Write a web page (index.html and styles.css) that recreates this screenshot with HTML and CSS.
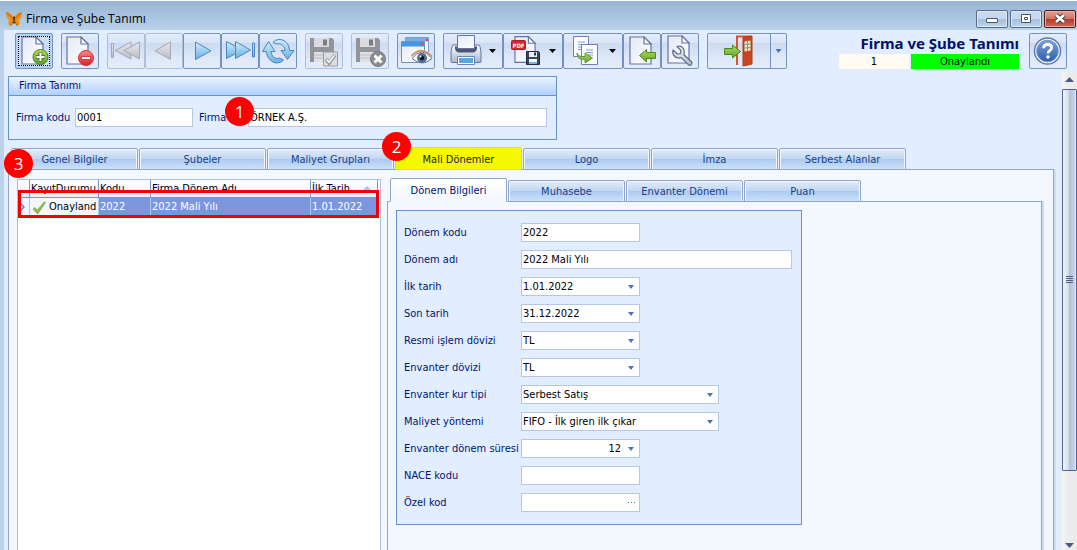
FILE: index.html
```html
<!DOCTYPE html>
<html lang="tr">
<head>
<meta charset="utf-8">
<title>Firma ve Şube Tanımı</title>
<link rel="stylesheet" href="styles.css">
</head>
<body>
<svg class="defs" aria-hidden="true">
  <defs>
    <linearGradient id="paper" x1="0" y1="0" x2="1" y2="1"><stop offset="0" stop-color="#e4e9f3"/><stop offset="1" stop-color="#ffffff"/></linearGradient>
    <linearGradient id="green" x1="0" y1="0" x2="0" y2="1"><stop offset="0" stop-color="#b6dc5c"/><stop offset="1" stop-color="#5da02c"/></linearGradient>
    <linearGradient id="red" x1="0" y1="0" x2="0" y2="1"><stop offset="0" stop-color="#f58a8a"/><stop offset="1" stop-color="#dc1f2b"/></linearGradient>
    <linearGradient id="blue" x1="0" y1="0" x2="0" y2="1"><stop offset="0" stop-color="#d3ecfb"/><stop offset="1" stop-color="#67b0e2"/></linearGradient>
    <linearGradient id="gray" x1="0" y1="0" x2="0" y2="1"><stop offset="0" stop-color="#e6e8ec"/><stop offset="1" stop-color="#b9bdc4"/></linearGradient>
    <linearGradient id="steel" x1="0" y1="0" x2="0" y2="1"><stop offset="0" stop-color="#fafbfe"/><stop offset="1" stop-color="#a9b6cf"/></linearGradient>
    <linearGradient id="ball" x1="0" y1="0" x2="0" y2="1"><stop offset="0" stop-color="#7ba4dc"/><stop offset="1" stop-color="#2c5cac"/></linearGradient>
    <symbol id="page" viewBox="0 0 24 29"><path d="M1 1h14l7 7v20H1z" fill="url(#paper)" stroke="#6472a4" stroke-width="1.2"/><path d="M15 1v7h7z" fill="#fff" stroke="#6472a4" stroke-width="1.2"/></symbol>
    <symbol id="floppy" viewBox="0 0 26 26"><path d="M1 1h22l2 2v22H1z" fill="#92949a"/><path d="M5 1h15v9H5z" fill="#d9dbe0"/><path d="M14 2.500h4v6h-4z" fill="#7b7d83"/><path d="M5 15h16v10H5z" fill="#dfe0e3"/><path d="M5 18h16M5 21h16" stroke="#b9bbc0"/></symbol>
  </defs>
</svg>
<div class="window">
  <header class="titlebar">
    <svg class="logo" width="16" height="16" viewBox="0 0 16 16" aria-hidden="true"><path d="M7.500 7C6 2.500 2.500.5.300 1.300 0 4 .8 8.500 3.500 9 1.500 10.500 2.500 14 4.500 15.300 6.500 14 7.500 11 7.700 9z" fill="#f08c12"/><path d="M8.500 7C10 2.500 13.500.5 15.700 1.300 16 4 15.200 8.500 12.500 9c2 1.500 1 5-1 6.300C9.500 14 8.500 11 8.300 9z" fill="#f08c12"/><path d="M8 5.500v7" stroke="#3c200a" stroke-width="1.600"/><path d="M.5 1.500l6.500 6M15.500 1.500L9 7.500M5 14.500l2.500-5M11 14.500L8.500 9.500" stroke="#a85a0c" stroke-width=".8"/></svg>
    <span class="caption">Firma ve Şube Tanımı</span>
    <div class="controls">
      <button class="ctl" aria-label="Küçült"><svg width="30" height="16" viewBox="0 0 30 16"><rect x="9.500" y="7.500" width="11" height="4" rx=".5" fill="#fff" stroke="#4a5566"/></svg></button>
      <button class="ctl" aria-label="Büyüt"><svg width="30" height="16" viewBox="0 0 30 16"><path d="M10.500 3.500h9v8h-9z" fill="#fff" stroke="#4a5566"/><path d="M13.500 6.500h3v2h-3z" stroke="#4a5566" fill="#fff"/></svg></button>
      <button class="ctl ctl-close" aria-label="Kapat"><svg width="30" height="16" viewBox="0 0 30 16"><path d="M11 4l8 7M19 4l-8 7" stroke="#4b3038" stroke-width="4.400"/><path d="M11 4l8 7M19 4l-8 7" stroke="#fff" stroke-width="2.600"/></svg></button>
    </div>
  </header>

  <div class="toolbar">
    <div class="tools">
      <div class="group"><button class="tool tool-focus" aria-label="Yeni"><svg width="36" height="34" viewBox="0 0 36 34"><use href="#page" x="5" y="2" width="24" height="29"/><circle cx="24.500" cy="23" r="7.500" fill="url(#green)" stroke="#4a8420"/><path d="M24.500 18.500v9M20 23h9" stroke="#4a7d22" stroke-width="4"/><path d="M24.500 19v8M20.500 23h8" stroke="#fff" stroke-width="2"/></svg></button></div>
      <div class="group"><button class="tool" aria-label="Sil"><svg width="36" height="34" viewBox="0 0 36 34"><use href="#page" x="4" y="2" width="24" height="29"/><circle cx="24" cy="24" r="7.500" fill="url(#red)" stroke="#d33"/><path d="M19.500 22.500h9v3h-9z" fill="#fff" stroke="#c22" stroke-width=".8"/></svg></button></div>
      <div class="group">
        <button class="tool" disabled aria-label="İlk"><svg width="36" height="34" viewBox="0 0 36 34"><g fill="url(#gray)" stroke="#a3a8b2"><path d="M3.500 9.500h2v14h-2z"/><path d="M23 8v17L7 16.500z"/><path d="M31.500 8v17L16 16.500z"/></g></svg></button>
        <button class="tool" disabled aria-label="Önceki"><svg width="36" height="34" viewBox="0 0 36 34"><path d="M24.500 8v17.500L9 16.800z" fill="url(#gray)" stroke="#a3a8b2"/></svg></button>
        <button class="tool" aria-label="Sonraki"><svg width="36" height="34" viewBox="0 0 36 34"><path d="M11.500 8v17.500L27 16.800z" fill="url(#blue)" stroke="#4a86c4"/></svg></button>
        <button class="tool" aria-label="Son"><svg width="36" height="34" viewBox="0 0 36 34"><g fill="url(#blue)" stroke="#4a86c4"><path d="M4.500 7.500v17l16-8.500z"/><path d="M13.500 7.500v17l15-8.500z"/><path d="M30.500 9h2v14h-2z"/></g></svg></button>
        <button class="tool" aria-label="Yenile"><svg width="36" height="34" viewBox="0 0 36 34"><g fill="url(#blue)" stroke="#4788b8" stroke-linejoin="round"><path d="M13 8.500Q15 5.500 19 5.500c6 0 10 4 10.500 11H34l-6.500 9-6.500-9h4c-.5-5-4-7.500-8-6.500z"/><path d="M23.500 26Q21 29 17 29C11 28.500 7 24 6.500 17.500H2.500l6-10 6.500 10h-4c.5 5 4 8 8.500 6.500z"/></g></svg></button>
      </div>
      <div class="group"><button class="tool" disabled aria-label="Kaydet"><svg width="36" height="34" viewBox="0 0 36 34"><use href="#floppy" x="3" y="3" width="26" height="26"/><path d="M17.500 18h14v14h-14z" fill="#dcdde0" stroke="#9a9ca1"/><path d="M20 25l3 4 6-8" fill="none" stroke="#8d8f94" stroke-width="3.400"/><path d="M20.500 25.500l2.500 2.800 5.500-7" fill="none" stroke="#fff" stroke-width="1.500"/></svg></button></div>
      <div class="group"><button class="tool" disabled aria-label="Vazgeç"><svg width="36" height="34" viewBox="0 0 36 34"><use href="#floppy" x="3" y="3" width="26" height="26"/><circle cx="26" cy="25" r="7.500" fill="#8a8c91" stroke="#77797e"/><path d="M22.500 21.500l7 7M29.500 21.500l-7 7" stroke="#fff" stroke-width="3"/></svg></button></div>
      <div class="group"><button class="tool" aria-label="İzle"><svg width="36" height="34" viewBox="0 0 36 34"><path d="M7.500 3.500h23v15h-23z" fill="#fff" stroke="#7a9cc8"/><path d="M8 4h22v3.500H8z" fill="#6db1e6"/><path d="M3.500 7.500h23v21h-23z" fill="url(#paper)" stroke="#6e8fc0"/><path d="M4 8h22v4.500H4z" fill="#4797dc"/><path d="M28 5h2v2h-2zM23 9h2v2h-2z" fill="#e34a34"/><path d="M14 24.500q10-13 20 0-10 9-20 0z" fill="#fff" stroke="#6b6f86"/><path d="M13.500 22q10-11 20.500 1" fill="none" stroke="#c99a72" stroke-width="2"/><circle cx="24" cy="24" r="5" fill="#4f6c94"/><circle cx="24" cy="24" r="2.200" fill="#0c1420"/><circle cx="22.500" cy="22.500" r="1" fill="#fff"/></svg></button></div>
      <div class="group">
        <button class="tool tool-wide" aria-label="Yazdır"><svg width="58" height="34" viewBox="0 0 58 34"><path d="M8 12.500q0-1.500 2-1.500h24q2 0 2 1.500l1 5.500v9.500q0 1-1 1H8q-1 0-1-1V18z" fill="url(#steel)" stroke="#66759c"/><path d="M11 12.500h22V15q-1.500 3.500-4 3.500H15q-2.500 0-4-3.500z" fill="#4b5572"/><path d="M13.500 1.500h17v13h-17z" fill="url(#paper)" stroke="#66759c"/><path d="M13.500 22.500h17v8h-17z" fill="#fff" stroke="#6c86b0"/><path d="M15 24h14v5H15z" fill="#57a7e2"/><path d="M45 15h7l-3.500 4z" fill="#000"/></svg></button>
        <button class="tool tool-wide" aria-label="PDF olarak kaydet"><svg width="58" height="34" viewBox="0 0 58 34"><use href="#page" x="10" y="1" width="23" height="29"/><rect x="7.500" y="6.500" width="14" height="9" rx="1" fill="#d3292f" stroke="#a81d24"/><text class="pdf" x="14.500" y="13.500" text-anchor="middle">PDF</text><path d="M22.500 17.500h12l1 1v12h-13z" fill="#39445f" stroke="#1f2a44"/><path d="M25 18h8v5h-8z" fill="#e8edf5"/><path d="M30 18.500h2v3h-2z" fill="#2b3550"/><path d="M25 25h8v5h-8z" fill="#fff"/><path d="M25 28h8v2h-8z" fill="#6cb6e6"/><path d="M45 15h7l-3.500 4z" fill="#000"/></svg></button>
        <button class="tool tool-wide" aria-label="Kopyala"><svg width="58" height="34" viewBox="0 0 58 34"><path d="M9.500 2.500h15v20h-15z" fill="#fbfcff" stroke="#6f7fb4"/><path d="M14 8h7M14 10.500h7M14 13h7M14 15.500h4" stroke="#8498cc"/><path d="M17.500 10.500h16v20h-16z" fill="#fbfcff" stroke="#6f7fb4"/><path d="M22 16h7M22 18.500h7M23 21h6" stroke="#8498cc"/><path d="M13 19q1 4 8 3.500v-3.500l7.500 5-7.500 5v-3.500Q13 26 13 19z" fill="url(#green)" stroke="#4c8a1e" stroke-width=".8"/><path d="M45 15h7l-3.500 4z" fill="#000"/></svg></button>
        <button class="tool" aria-label="İçe aktar"><svg width="36" height="34" viewBox="0 0 36 34"><use href="#page" x="5" y="2" width="24" height="29"/><path d="M15.500 21.500l7-6v3h9v6h-9v3.500z" fill="url(#green)" stroke="#4c8a1e"/></svg></button>
        <button class="tool" aria-label="Ayarlar"><svg width="36" height="34" viewBox="0 0 36 34"><use href="#page" x="5" y="1" width="24" height="29"/><path d="M15 12.500l4 4-.5 3-3 .5-4.500-4c-1 3.500 1 7.500 5 8 1.500.2 2.500-.2 3.500-.2l7 7c2 1.500 4.500-1 3-3l-7.500-7c.5-1.500.6-3-.2-5-1.100-2.800-4-4-6.800-3.300z" fill="url(#steel)" stroke="#5b6a86" stroke-width="1.200" stroke-linejoin="round"/></svg></button>
      </div>
      <div class="group">
        <button class="tool tool-exit" aria-label="Çıkış"><svg width="61" height="34" viewBox="0 0 61 34"><path d="M29 31V2.500h14" fill="none" stroke="#e0522c" stroke-width="2"/><path d="M35 3.500l9-1.500v28l-9 2z" fill="#c9441f" stroke="#b23a18"/><path d="M36.500 7.500l6-1v10l-6 1z" fill="#f3e6c4"/><path d="M39.500 6.500v11M36 10.500l7-.5M36 14l7-.5" stroke="#7f9a72"/><path d="M16.500 14.500h8v-3.500l8 6.500-8 6.500v-3.500h-8z" fill="url(#green)" stroke="#4c8a1e"/></svg></button>
        <button class="tool tool-drop" aria-label="Çıkış seçenekleri"><i class="arrow"></i></button>
      </div>
    </div>
    <div class="summary">
      <h1 class="heading">Firma ve Şube Tanımı</h1>
      <div class="states"><span class="state-no">1</span><span class="state-ok">Onaylandı</span></div>
    </div>
    <button class="tool" aria-label="Yardım"><svg width="36" height="34" viewBox="0 0 36 34"><circle cx="17.500" cy="17" r="13" fill="#f5f8fd" stroke="#5b78ac" stroke-width="1.400"/><circle cx="17.500" cy="17" r="10.800" fill="url(#ball)" stroke="#6e92cc"/><path d="M13.700 14.200q0-3.700 4-3.700 3.900 0 3.900 3.200 0 1.800-2 3-1.500 1-1.500 2.800" fill="none" stroke="#fff" stroke-width="2.800"/><circle cx="18" cy="23" r="1.800" fill="#fff"/></svg></button>
  </div>

  <div class="body">
    <main class="content">
      <section class="company">
        <h2 class="company-title">Firma Tanımı</h2>
        <div class="company-fields">
          <label for="code">Firma kodu</label>
          <input class="box code" id="code" value="0001">
          <div class="name-label"><label for="name">Firma</label><span class="badge badge-1">1</span></div>
          <input class="box name" id="name" value="ÖRNEK A.Ş.">
        </div>
      </section>

      <nav class="tabs main-tabs">
        <button class="tab">Genel Bilgiler</button>
        <button class="tab">Şubeler</button>
        <button class="tab">Maliyet Grupları</button>
        <button class="tab tab-marked">Mali Dönemler<span class="badge badge-2">2</span></button>
        <button class="tab">Logo</button>
        <button class="tab">İmza</button>
        <button class="tab">Serbest Alanlar</button>
      </nav>

      <div class="sheet">
        <section class="list">
          <table class="grid">
            <colgroup><col class="c-mark"><col class="c-state"><col class="c-code"><col class="c-name"><col class="c-date"></colgroup>
            <thead><tr><th></th><th>KayıtDurumu</th><th>Kodu</th><th>Firma Dönem Adı</th><th><span class="sorted">İlk Tarih<i class="sort"></i></span></th></tr></thead>
            <tbody><tr>
              <td class="plain"><svg class="mark" width="6" height="8" viewBox="0 0 6 8"><path d="M1 0l4 4-4 4" fill="none" stroke="#3d86d8" stroke-width="1.500"/></svg></td>
              <td class="plain"><span class="status"><svg width="13" height="13" viewBox="0 0 13 13"><path d="M0 8l2-1.500L4.500 9 11 1l1.500.5L5 12.500H4z" fill="#8fc14c" stroke="#6a9c34" stroke-width=".6"/></svg>Onayland</span></td>
              <td>2022</td><td>2022 Mali Yılı</td><td>1.01.2022</td>
            </tr></tbody>
          </table>
          <div class="frame"></div>
          <span class="badge badge-3">3</span>
        </section>

        <section class="detail">
          <nav class="tabs sub-tabs">
            <button class="tab tab-open">Dönem Bilgileri</button>
            <button class="tab">Muhasebe</button>
            <button class="tab">Envanter Dönemi</button>
            <button class="tab">Puan</button>
          </nav>
          <div class="pane">
            <form class="form">
              <label for="f1">Dönem kodu</label><input class="box short" id="f1" value="2022">
              <label for="f2">Dönem adı</label><input class="box" id="f2" value="2022 Mali Yılı">
              <label for="f3">İlk tarih</label><div class="combo short"><input class="box" id="f3" value="1.01.2022"><i class="arrow"></i></div>
              <label for="f4">Son tarih</label><div class="combo short"><input class="box" id="f4" value="31.12.2022"><i class="arrow"></i></div>
              <label for="f5">Resmi işlem dövizi</label><div class="combo short"><select class="box" id="f5"><option>TL</option></select><i class="arrow"></i></div>
              <label for="f6">Envanter dövizi</label><div class="combo short"><select class="box" id="f6"><option>TL</option></select><i class="arrow"></i></div>
              <label for="f7">Envanter kur tipi</label><div class="combo medium"><select class="box" id="f7"><option>Serbest Satış</option></select><i class="arrow"></i></div>
              <label for="f8">Maliyet yöntemi</label><div class="combo medium"><select class="box" id="f8"><option>FIFO - İlk giren ilk çıkar</option></select><i class="arrow"></i></div>
              <label for="f9">Envanter dönem süresi</label><div class="combo short"><input class="box number" id="f9" value="12"><i class="arrow"></i></div>
              <label for="f10">NACE kodu</label><input class="box short" id="f10">
              <label for="f11">Özel kod</label><div class="combo short"><input class="box" id="f11"><button type="button" class="more" aria-label="Seç"><svg width="9" height="3" viewBox="0 0 9 3"><path d="M1 1h1v1H1zM4 1h1v1H4zM7 1h1v1H7z" fill="#4a76b4"/></svg></button></div>
            </form>
          </div>
        </section>
      </div>
    </main>
    <div class="scroll">
      <svg class="scroll-arrow" width="9" height="5" viewBox="0 0 9 5"><path d="M0 5h9L4.500 0z" fill="#4a5a86"/></svg>
      <div class="thumb"><i class="grip"></i></div>
      <svg class="scroll-arrow" width="9" height="5" viewBox="0 0 9 5"><path d="M0 0h9L4.500 5z" fill="#4a5a86"/></svg>
    </div>
  </div>
</div>
</body>
</html>
```

FILE: styles.css
```css
* { box-sizing: border-box; }

body {
  margin: 0;
  color: #000;
  font: 11px/14px "DejaVu Sans Condensed", "DejaVu Sans", sans-serif;
}

button, input, select { margin: 0; padding: 0; color: inherit; font: inherit; }
.defs { position: absolute; width: 0; height: 0; }

.window {
  display: flex;
  flex-direction: column;
  min-height: 100vh;
  background: #e2eeff;
  border-left: 4px solid #b9d1ea;
}

/* title bar */
.titlebar {
  display: flex;
  align-items: center;
  height: 30px;
  margin-left: -4px;
  padding: 6px 1px 0 6px;
  gap: 4px;
  border-top: 1px solid #fff;
  background: linear-gradient(#98b4d2, #b9d1ea);
}
.caption { flex: 1; font: 12px/16px "Open Sans", sans-serif; }
.controls { display: flex; gap: 2px; }
.ctl {
  width: 32px;
  height: 18px;
  border: 1px solid #566b85;
  border-radius: 2px;
  background: linear-gradient(#c6d9ee 50%, #a3bedb 50%, #bdd4ec);
  box-shadow: inset 0 0 0 1px #dce9f6;
}
.ctl svg { display: block; }
.ctl-close {
  border-color: #4a1a20;
  background: linear-gradient(#e2a196, #d0735f 50%, #b5382a 50%, #cc6a52);
  box-shadow: inset 0 0 0 1px #e8b0a4;
}

/* toolbar */
.toolbar { display: flex; align-items: flex-start; padding: 3px 10px 3px 11px; gap: 10px; }
.tools { display: flex; flex: 1; gap: 8px; }
.group { display: flex; }
.tool {
  flex: none;
  width: 38px;
  height: 36px;
  border: 1px solid #7391c3;
  border-radius: 2px;
  background: linear-gradient(#e4edfa, #d8e4f5 26%, #ccdaf0 27%, #dfe9f9 75%, #e2edfc);
}
.tool svg { display: block; }
.tool:disabled { border-color: #aebfd9; }
.tool-focus {
  background: linear-gradient(#d4e4f8, #c6daf4 50%, #d6e6fa);
  box-shadow: inset 0 0 0 2px #b4d0f2;
  outline: 1px dotted #000;
  outline-offset: -4px;
}
.tool-wide { width: 60px; }
.tool-exit { width: 64px; border-radius: 2px 0 0 2px; }
.tool-drop { display: flex; align-items: center; justify-content: center; width: 16px; border-left: 0; border-radius: 0 2px 2px 0; }
.pdf { fill: #fff; font: bold 6px "DejaVu Sans Condensed", sans-serif; }
.summary { width: 180px; }
.heading { margin: 0; color: #00126e; font: bold 15px/21px "Noto Sans", sans-serif; text-align: right; white-space: nowrap; }
.states { display: flex; gap: 2px; line-height: 15px; text-align: center; }
.state-no { width: 70px; background: #fffbf0; }
.state-ok { flex: 1; background: #00ff00; }

.arrow { display: block; flex: none; width: 6px; height: 4px; background: #4a76b4; clip-path: polygon(0 0, 100% 0, 50% 100%); }

/* body and scroll bar */
.body { display: flex; flex: 1; }
.content { display: flex; flex: 1; flex-direction: column; min-width: 0; padding: 4px 8px 0 4px; }
.scroll {
  display: flex;
  flex: none;
  flex-direction: column;
  align-items: center;
  width: 15px;
  padding: 5px 0 2px;
  background: linear-gradient(90deg, #f6f6f6, #ececec 40%);
}
.scroll-arrow { flex: none; }
.thumb {
  display: flex;
  flex: 0 0 81%;
  align-items: center;
  justify-content: center;
  width: 15px;
  margin: 7px 0 auto;
  border: 1px solid #4f6296;
  border-radius: 1px;
  background: linear-gradient(90deg, #f2f4f8, #d3dbe7 45%, #b3c1d6 50%, #c8d4e6 90%, #f0f4fa);
}
.grip { width: 7px; height: 7px; background: repeating-linear-gradient(#4f5f88 0 1px, transparent 1px 2px); }

/* fields */
label { color: #00156e; white-space: nowrap; }
.box {
  display: block;
  width: 100%;
  min-width: 0;
  height: 19px;
  padding: 0 1px;
  border: 1px solid #b4c7e3;
  border-radius: 0;
  background: #fff;
  appearance: none;
}
.number { padding-right: 18px; text-align: right; }
.combo { position: relative; }
.combo .arrow { position: absolute; top: 8px; right: 6px; pointer-events: none; }
.more { position: absolute; top: 1px; right: 1px; display: flex; align-items: center; justify-content: center; width: 16px; height: 17px; border: 0; background: none; }

.company { width: 549px; border: 1px solid #6593cf; }
.company-title {
  margin: 0;
  padding: 2px 10px;
  border-bottom: 1px solid #6593cf;
  color: #00156e;
  background: linear-gradient(#eaf3ff, #cfe2ff 50%, #b0d1ff);
  font: inherit;
}
.company-fields { display: flex; align-items: center; padding: 12px 9px 12px 7px; }
.code { flex: none; width: 118px; margin: 0 6px 0 auto; }
.name-label { position: relative; width: 49px; }
.name { flex: none; width: 299px; }

/* tabs */
.tabs { position: relative; z-index: 1; display: flex; align-items: flex-end; }
.main-tabs { margin-top: 7px; padding-left: 3px; }
.sub-tabs { padding-left: 3px; }
.tab {
  position: relative;
  width: 127px;
  height: 22px;
  margin-right: 1px;
  padding-top: 2px;
  border: 1px solid #8fa5cb;
  border-radius: 2px 2px 0 0;
  color: #15428b;
  background: linear-gradient(#e2ecf9, #c2d7f1 48%, #abc9ef 50%, #cde0f8);
  box-shadow: inset 1px 1px #f2f7fe, inset -1px 0 #f2f7fe;
}
.tab-marked { height: 23px; border-color: #d8dc50; color: #222; background: #f4f800; box-shadow: none; }
.sub-tabs .tab { width: 117px; }
.sub-tabs .tab-open { height: 24px; border-bottom-color: #f3f8ff; color: #00156e; background: linear-gradient(#fff, #f3f8ff); box-shadow: none; }

.sheet {
  display: flex;
  flex: 1;
  margin-top: -1px;
  padding: 8px 11px 0 8px;
  gap: 6px;
  border: 1px solid #8fa5cb;
  border-bottom: 0;
  background: #f3f8ff;
  box-shadow: 2px 0 #cadef5;
}

/* period list */
.list { position: relative; flex: none; width: 364px; margin-top: 1px; border: 1px solid #a9bedc; border-bottom: 0; background: #fff; }
.grid { width: 360px; border-collapse: separate; border-spacing: 0; table-layout: fixed; }
.grid th, .grid td { height: 18px; padding: 0 1px; font-weight: normal; text-align: left; white-space: nowrap; }
.grid th { overflow: hidden; border-right: 1px solid #6f9ad2; border-bottom: 1px solid #6f9ad2; background: linear-gradient(#fff, #e6effb); }
.grid td { border-right: 1px solid #b4c7ea; color: #fff; background: #7b96df; }
.grid .plain { color: #000; background: #f3f8ff; }
.c-mark { width: 12px; }
.c-state { width: 69px; }
.c-code { width: 52px; }
.c-name { width: 160px; }
.sorted { display: flex; align-items: center; justify-content: space-between; }
.sort { width: 10px; height: 5px; margin-right: 4px; background: #a4c8f0; clip-path: polygon(50% 0, 100% 100%, 0 100%); }
.mark { display: block; }
.status { display: flex; align-items: center; gap: 3px; padding-left: 2px; }
.frame { position: absolute; top: 10px; left: 0; width: 361px; height: 28px; border: 3px solid #f00000; }

/* period form */
.detail { display: flex; flex: 1; flex-direction: column; min-width: 0; }
.pane { flex: 1; margin-top: -1px; padding: 8px 8px 24px; border: 1px solid #8fa5cb; border-bottom: 0; box-shadow: 2px 0 #cadef5; }
.form {
  display: grid;
  grid-template-columns: 117px 1fr;
  grid-auto-rows: 19px;
  align-items: center;
  row-gap: 8px;
  width: 406px;
  padding: 12px 9px 12px 7px;
  border: 1px solid #6593cf;
  background: #e2eeff;
}
.short { width: 119px; }
.medium { width: 198px; }

/* numbered markers */
.badge {
  position: absolute;
  z-index: 2;
  width: 29px;
  height: 29px;
  border-radius: 50%;
  color: #fff;
  background: #f00;
  font: 17px/29px "Open Sans", sans-serif;
  text-align: center;
}
.badge-1 { top: -14px; left: 26px; }
.badge-2 { top: -16px; left: -14px; }
.badge-3 { top: -31px; left: -14px; }
```
